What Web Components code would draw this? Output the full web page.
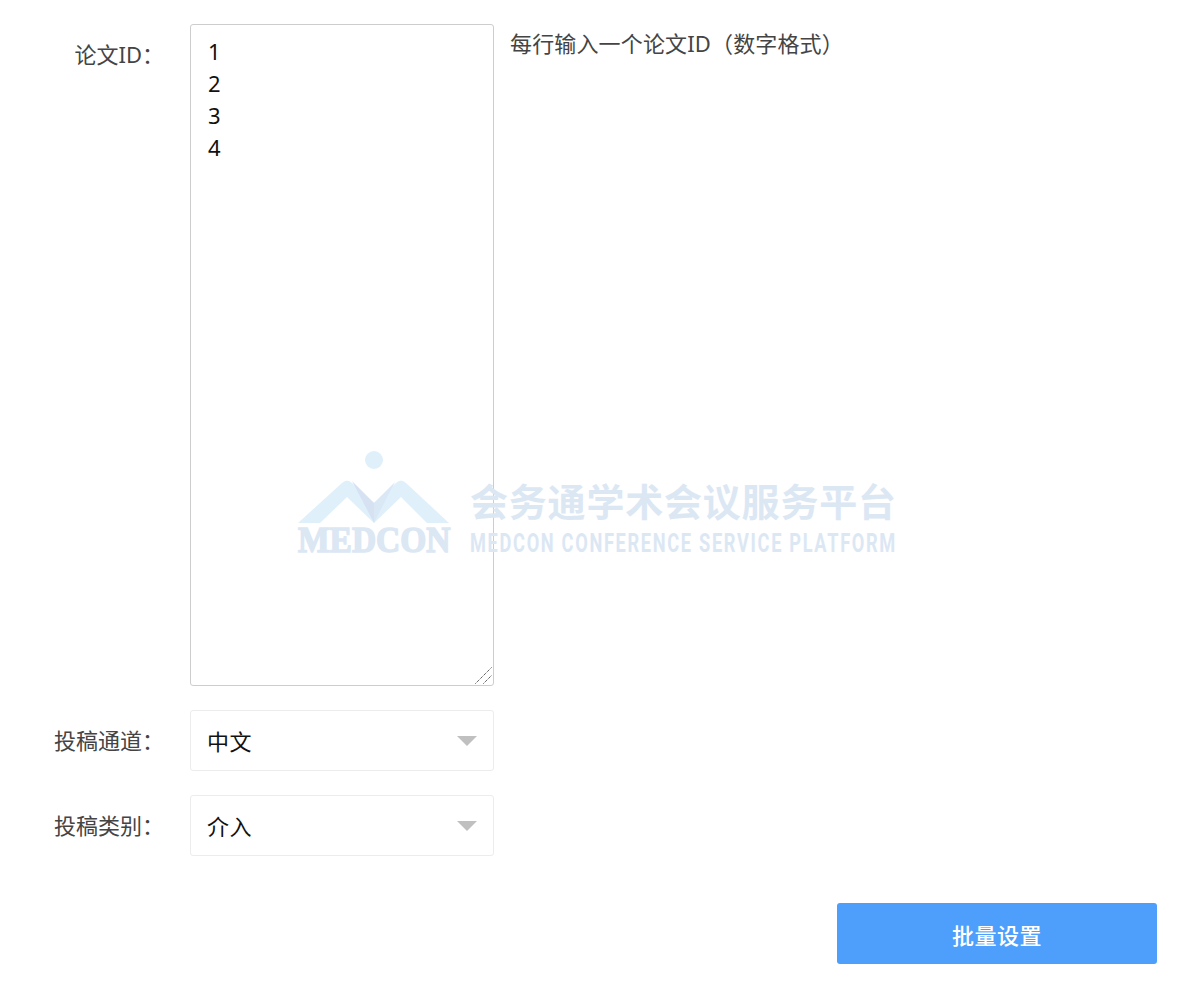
<!DOCTYPE html>
<html lang="zh">
<head>
<meta charset="utf-8">
<title>批量设置</title>
<style>
  html, body { margin: 0; background: #fff; }
  body {
    font-family: "Noto Sans", "Noto Sans CJK SC", sans-serif;
    color: #333;
  }
</style>
</head>
<body>
<batch-form></batch-form>

<script>
class FormRow extends HTMLElement {
  constructor() {
    super();
    this.attachShadow({ mode: 'open' });
    this.shadowRoot.innerHTML = `
      <style>
        :host {
          display: grid;
          grid-template-columns: 164px 304px auto;
          column-gap: 26px;
          align-items: start;
          font-size: 22px;
          color: #444;
        }
        .label {
          text-align: right;
          white-space: nowrap;
          line-height: 61px;
        }
      </style>
      <div class="label"><slot name="label"></slot></div>
      <slot></slot>
      <slot name="hint"></slot>
    `;
  }
}

class IdInput extends HTMLElement {
  constructor() {
    super();
    this.attachShadow({ mode: 'open' });
    this.shadowRoot.innerHTML = `
      <style>
        :host { display: block; position: relative; height: 662px; }
        textarea {
          display: block;
          box-sizing: border-box;
          width: 304px;
          height: 662px;
          margin: 0;
          padding: 10px 17px;
          border: 1px solid #cdcdcd;
          border-radius: 3px;
          outline: none;
          resize: none;
          background: transparent;
          font: 22px/32px "Noto Sans", "Noto Sans CJK SC", sans-serif;
          color: #111;
        }
        svg { position: absolute; right: 2px; bottom: 2px; }
      </style>
      <textarea>1
2
3
4</textarea>
      <svg width="17" height="17" viewBox="0 0 17 17">
        <path d="M0.5 16.5 L16.5 0.5 M8.5 16.5 L16.5 8.5" stroke="#222" stroke-width="1" stroke-dasharray="1 1" fill="none"/>
      </svg>
    `;
  }
}

class PickBox extends HTMLElement {
  constructor() {
    super();
    this.attachShadow({ mode: 'open' });
    this.shadowRoot.innerHTML = `
      <style>
        :host {
          display: flex;
          align-items: center;
          justify-content: space-between;
          box-sizing: border-box;
          width: 304px;
          height: 61px;
          padding: 0 16px 0 16px;
          border: 1px solid #ececec;
          border-radius: 3px;
          font-size: 22px;
          color: #111;
        }
        span { margin-top: -2px; letter-spacing: .5px; }
        .arrow {
          width: 0;
          height: 0;
          margin-top: 1px;
          border-left: 10px solid transparent;
          border-right: 10px solid transparent;
          border-top: 10px solid #c0c0c0;
        }
      </style>
      <span><slot></slot></span>
      <i class="arrow"></i>
    `;
  }
}

class PrimaryButton extends HTMLElement {
  constructor() {
    super();
    this.attachShadow({ mode: 'open' });
    this.shadowRoot.innerHTML = `
      <style>
        :host {
          display: grid;
          place-content: center;
          width: 320px;
          height: 61px;
          border-radius: 3px;
          background: #4d9ffb;
          color: #fff;
          font-size: 22px;
          letter-spacing: .5px;
          font-weight: 500;
          cursor: pointer;
        }
      </style>
      <slot></slot>
    `;
  }
}

// the faint logo stamped across the middle of the page
class MedconWatermark extends HTMLElement {
  constructor() {
    super();
    this.attachShadow({ mode: 'open' });
    this.shadowRoot.innerHTML = `
      <style>
        :host {
          position: absolute;
          left: 298px;
          top: 450px;
          display: flex;
          gap: 17px;
          pointer-events: none;
        }
        .mark {
          display: flex;
          flex-direction: column;
          width: 155px;
        }
        svg { display: block; }
        .brand {
          margin-top: 5px;
          height: 24px;
          font: 900 36px/24px "Liberation Serif", serif;
          -webkit-text-stroke: 1.5px #dce7f4;
          color: #dce7f4;
          white-space: nowrap;
          transform: scaleX(.93);
          transform-origin: left;
        }
        .copy { padding-top: 28px; color: #dce7f4; white-space: nowrap; }
        .cn {
          font: 700 38px/44px "Noto Sans CJK SC", sans-serif;
          letter-spacing: 0.8px;
        }
        .en {
          font: 700 26px/26px "Roboto", "Liberation Sans", sans-serif;
          letter-spacing: 2.4px;
          transform: scaleX(.7);
          transform-origin: left;
          margin-top: 8px;
        }
      </style>
      <div class="mark">
        <svg width="155" height="73" viewBox="0 0 155 73">
          <circle cx="76" cy="10" r="9" fill="#dff0fb"/>
          <path d="M0 73 L44 33 Q49 28 54 33 L76 53 L98 33 Q103 28 108 33 L151 73 L129 73 L103 47 L76 73 L49 47 L22 73 Z" fill="#dff0fb"/>
          <path d="M54 31 L76 53 L76 73 Z" fill="#d6e2f2"/>
          <path d="M97 32 L76 53 L76 73 Z" fill="#dae8f6"/>
        </svg>
        <div class="brand">MEDCON</div>
      </div>
      <div class="copy">
        <div class="cn">会务通学术会议服务平台</div>
        <div class="en">MEDCON CONFERENCE SERVICE PLATFORM</div>
      </div>
    `;
  }
}

class BatchForm extends HTMLElement {
  constructor() {
    super();
    this.attachShadow({ mode: 'open' });
    this.shadowRoot.innerHTML = `
      <style>
        :host {
          display: flex;
          flex-direction: column;
          gap: 24px;
          position: relative;
          box-sizing: border-box;
          height: 1003px;
          padding-top: 24px;
        }
        .hint {
          font-size: 22px;
          line-height: 38px;
          letter-spacing: .15px;
          color: #444;
          margin-left: -10px;
          white-space: nowrap;
        }
        .actions {
          display: flex;
          justify-content: flex-end;
          padding: 23px 36px 0 0;
        }
      </style>
      <form-row>
        <span slot="label">论文ID：</span>
        <id-input></id-input>
        <span slot="hint" class="hint">每行输入一个论文ID（数字格式）</span>
      </form-row>
      <form-row>
        <span slot="label">投稿通道：</span>
        <pick-box>中文</pick-box>
      </form-row>
      <form-row>
        <span slot="label">投稿类别：</span>
        <pick-box>介入</pick-box>
      </form-row>
      <div class="actions"><primary-button>批量设置</primary-button></div>
      <medcon-watermark></medcon-watermark>
    `;
  }
}

customElements.define('form-row', FormRow);
customElements.define('id-input', IdInput);
customElements.define('pick-box', PickBox);
customElements.define('primary-button', PrimaryButton);
customElements.define('medcon-watermark', MedconWatermark);
customElements.define('batch-form', BatchForm);
</script>
</body>
</html>
